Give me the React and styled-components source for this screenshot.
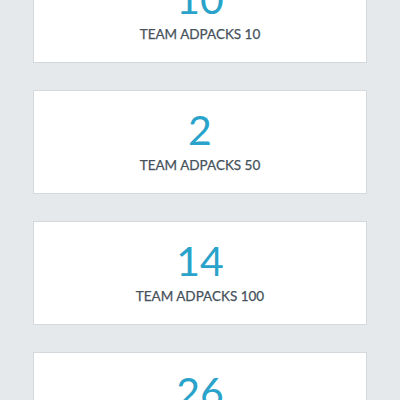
import React from "react";
import styled, { createGlobalStyle } from "styled-components";

const GlobalStyle = createGlobalStyle`
    html, body {
        margin: 0;
        padding: 0;
        background: #e5e9ec;
        font-family: Lato, "Open Sans", sans-serif;
        overflow: hidden;
    }
`

const Page = styled.div`
    display: flex;
    flex-direction: column;
    gap: 27px;
    padding: 0 33px;
    margin-top: -41px;
`

const Card = styled.div`
    flex: none;
    display: flex;
    flex-direction: column;
    align-items: center;
    justify-content: center;
    height: 102px;
    background: #ffffff;
    border: 1px solid #d3d9dd;
`

const Number = styled.div`
    font-size: 41px;
    font-weight: 400;
    line-height: 44px;
    color: #29a3c9;
    margin-top: -4px;
`

const Label = styled.div`
    font-size: 13.5px;
    font-weight: 400;
    color: #46525b;
    margin-top: 5px;
    -webkit-text-stroke: 0.25px #46525b;
`

const stats = [
    { value: 10, label: "TEAM ADPACKS 10" },
    { value: 2, label: "TEAM ADPACKS 50" },
    { value: 14, label: "TEAM ADPACKS 100" },
    { value: 26, label: "TEAM ADPACKS 500" },
]

export default function App() {
    return (
        <>
            <GlobalStyle />
            <Page>
                {stats.map((s) => (
                    <Card key={s.label}>
                        <Number>{s.value}</Number>
                        <Label>{s.label}</Label>
                    </Card>
                ))}
            </Page>
        </>
    )
}
